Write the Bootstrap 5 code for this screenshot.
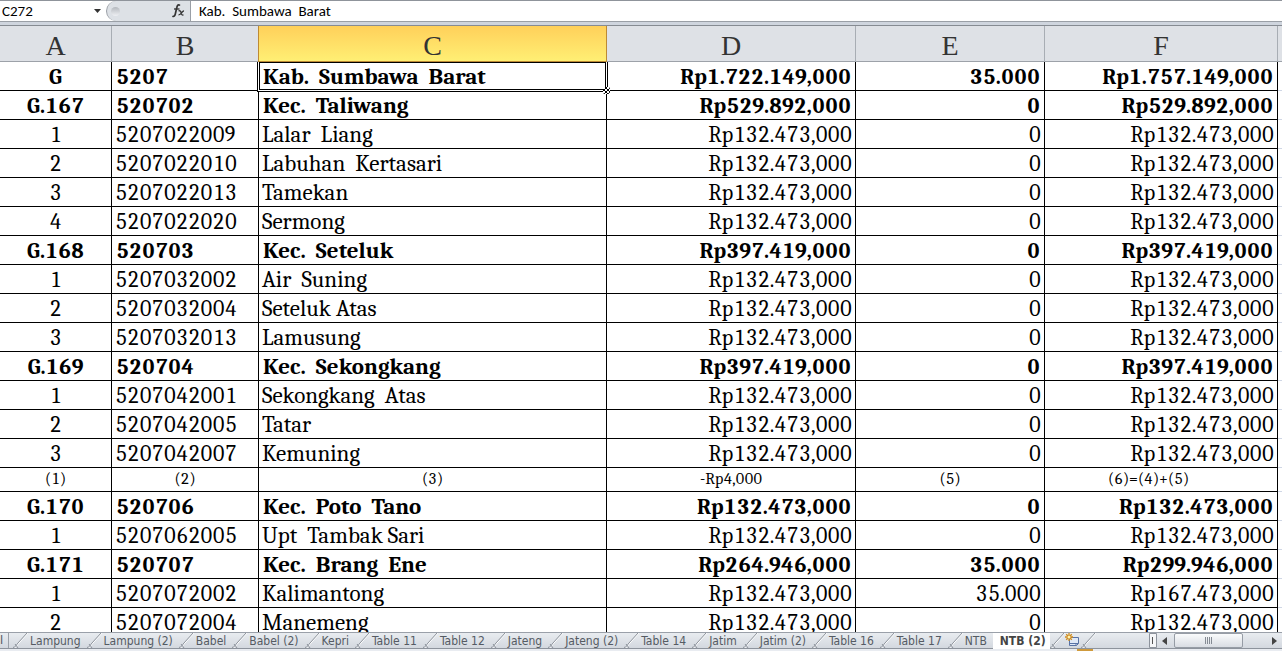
<!DOCTYPE html>
<html lang="id">
<head>
<meta charset="utf-8">
<meta name="viewport" content="width=device-width, initial-scale=1">
<title>NTB (2)</title>
<link href="https://cdn.jsdelivr.net/npm/bootstrap@5.3.0/dist/css/bootstrap.min.css" rel="stylesheet">
<style>
  body { font-family: "Noto Sans", "Open Sans", sans-serif; font-size: 12px; color: #000; background: #fff; }
  button, input { font: inherit; color: inherit; }

  /* formula bar */
  .formula-bar { height: 22px; border-top: 1px solid #8f949b; border-bottom: 1px solid #9a9fa6; font-family: Calibri, Carlito, "Noto Sans", sans-serif; font-size: 15px; }
  .formula-bar input { outline: 0; min-width: 0; }
  .name-box { width: 90px; padding: 0 2px; }
  .name-drop { width: 14px; }
  .fx-area { width: 85px; margin-left: 2px; background: #dde1e6; border: 1px solid #9a9fa6; border-width: 0 1px 0 1px; border-radius: 12px 0 0 12px; }
  .knob { width: 9px; height: 9px; border-radius: 50%; background: linear-gradient(#b4b8be, #eef0f3); }
  .formula-text { padding: 0 8px; white-space: pre; }
  .bar-gap { height: 4px; background: #cfd5de; border-bottom: 1px solid #868b92; }

  /* grid */
  .sheet { border-collapse: separate; border-spacing: 0; table-layout: fixed; font-family: Cambria, Caladea, "Liberation Serif", serif; font-size: 22px; font-variant-numeric: lining-nums tabular-nums; line-height: 26px; }
  .col-a { width: 112px; } .col-b { width: 147px; } .col-d { width: 249px; }
  .col-e { width: 189px; } .col-f { width: 233px; } .col-rest { width: 4px; }
  .sheet thead th { height: 36px; padding: 4px 0 0; font: 28px/30px "Liberation Serif", serif; text-align: center; color: #333; background: #dee1e6; border-right: 1px solid #a8adb4; border-bottom: 1px solid #9da2a9; }
  .sheet thead th.picked { background: linear-gradient(#ffd05a, #ffef74); border-color: #bd8a34; box-shadow: -1px 0 #bd8a34; }
  .sheet tbody td { height: 29px; padding: 2px 3px 0; border-right: 1px solid #000; border-bottom: 1px solid #000; white-space: pre; }
  .sheet tbody td:first-child { text-align: center; }
  .sheet tbody td:nth-child(3) { font-size: 23px; }
  .sheet tbody td:nth-child(n+4) { text-align: right; }
  .sheet tbody td:last-child, .sheet thead th:last-child { border-right: 0; padding: 0; }
  .sheet tbody td:last-child { border-bottom-color: #d0d7e5; }
  .sheet .group td { font-weight: 700; padding: 2px 4px 0; }
  .sheet .numbering td, .sheet .numbering td:nth-child(3) { height: 24px; padding-top: 0; font-size: 16px; line-height: 23px; text-align: center; }
  .sheet .numbering td:nth-child(n+4) { text-align: center; }
  .sheet .numbering td.label-d { text-align: left; padding-left: 93px; }
  .sheet .numbering td.label-f { text-align: left; padding-left: 63px; }
  .active-cell::before { content: ""; position: absolute; inset: 0; border: 1px solid #000; box-shadow: 0 0 0 1px #fff, 0 0 0 2px #000; clip-path: inset(0 -2px -2px -2px); }
  .active-cell::after { content: ""; position: absolute; right: -4px; bottom: -4px; width: 7px; height: 7px; background: conic-gradient(#000 25%, #fff 0 50%, #000 0 75%, #fff 0) 0 0 / 4px 4px; border-radius: 2px; }

  /* sheet tabs */
  .tab-strip { height: 17px; background: linear-gradient(#e9ecf0, #d3d8df); border-top: 1px solid #9aa0a9; border-bottom: 1px solid #8d939c; font-family: "DejaVu Sans Condensed", "DejaVu Sans", sans-serif; font-size: 12px; line-height: 14px; color: #555b63; }
  .tab-strip button { padding: 0; border: 0; background: none; white-space: nowrap; }
  .tab-edge { width: 9px; height: 15px; border-right: 1px solid #9aa0a9; }
  .slant { width: 15px; height: 15px; }
  .tab-name { padding: 0 6px 0 2px !important; }
  .tab-name.current { background: #fff; font-weight: 700; padding: 0 4px 0 7px !important; height: 16px; color: #444; }
  .scroll-area { width: 133px; height: 15px; }
  .thumb { width: 69px; height: 15px; border: 1px solid #969ca5 !important; border-radius: 2px; background: linear-gradient(#fafbfc, #d9dde3) !important; }
  .status-edge { height: 2px; background: #e9ecf1; }
  .status-mark { width: 16px; height: 2px; margin-left: 1077px; background: #cf9a3c; }
</style>
</head>
<body class="d-flex flex-column vh-100 overflow-hidden">

<div class="formula-bar d-flex align-items-stretch flex-shrink-0">
  <input class="name-box border-0" type="text" value="C272" aria-label="Name box">
  <button class="name-drop border-0 bg-transparent p-0 d-flex align-items-center justify-content-center" type="button" aria-label="Choose a name">
    <svg width="7" height="4" viewBox="0 0 7 4"><path d="M0 0h7L3.500 4z" fill="#333"/></svg>
  </button>
  <div class="fx-area d-flex align-items-center justify-content-between ps-1 pe-1 flex-shrink-0">
    <span class="knob"></span>
    <button class="border-0 bg-transparent p-0 d-flex" type="button" aria-label="Insert function">
      <svg width="15" height="16" viewBox="0 0 15 16" fill="none" stroke="#333"><path d="M9 2.500C7.500 1 6.300 2 5.800 4.500L4.300 11C3.900 13 2.800 14 1.500 13" stroke-width="1.700"/><path d="M3 6h5.500" stroke-width="1.300"/><path d="M7.500 8c1.600-.8 2.200.2 2.700 2s1 2.600 2.300 1.700M13 8c-2-.4-2.600 4-5.500 3.800" stroke-width="1.300"/></svg>
    </button>
  </div>
  <input class="formula-text border-0 flex-grow-1" type="text" value="Kab.  Sumbawa  Barat" aria-label="Formula">
</div>
<div class="bar-gap flex-shrink-0"></div>

<main class="flex-grow-1 overflow-hidden">
<table class="sheet w-100">
  <colgroup><col class="col-a"><col class="col-b"><col><col class="col-d"><col class="col-e"><col class="col-f"><col class="col-rest"></colgroup>
  <thead><tr><th>A</th><th>B</th><th class="picked">C</th><th>D</th><th>E</th><th>F</th><th></th></tr></thead>
  <tbody>
    <tr class="group"><td>G</td><td>5207</td><td class="active-cell position-relative">Kab.  Sumbawa  Barat</td><td>Rp1.722.149,000</td><td>35.000</td><td>Rp1.757.149,000</td><td></td></tr>
    <tr class="group"><td>G.167</td><td>520702</td><td>Kec.  Taliwang</td><td>Rp529.892,000</td><td>0</td><td>Rp529.892,000</td><td></td></tr>
    <tr><td>1</td><td>5207022009</td><td>Lalar  Liang</td><td>Rp132.473,000</td><td>0</td><td>Rp132.473,000</td><td></td></tr>
    <tr><td>2</td><td>5207022010</td><td>Labuhan  Kertasari</td><td>Rp132.473,000</td><td>0</td><td>Rp132.473,000</td><td></td></tr>
    <tr><td>3</td><td>5207022013</td><td>Tamekan</td><td>Rp132.473,000</td><td>0</td><td>Rp132.473,000</td><td></td></tr>
    <tr><td>4</td><td>5207022020</td><td>Sermong</td><td>Rp132.473,000</td><td>0</td><td>Rp132.473,000</td><td></td></tr>
    <tr class="group"><td>G.168</td><td>520703</td><td>Kec.  Seteluk</td><td>Rp397.419,000</td><td>0</td><td>Rp397.419,000</td><td></td></tr>
    <tr><td>1</td><td>5207032002</td><td>Air  Suning</td><td>Rp132.473,000</td><td>0</td><td>Rp132.473,000</td><td></td></tr>
    <tr><td>2</td><td>5207032004</td><td>Seteluk Atas</td><td>Rp132.473,000</td><td>0</td><td>Rp132.473,000</td><td></td></tr>
    <tr><td>3</td><td>5207032013</td><td>Lamusung</td><td>Rp132.473,000</td><td>0</td><td>Rp132.473,000</td><td></td></tr>
    <tr class="group"><td>G.169</td><td>520704</td><td>Kec.  Sekongkang</td><td>Rp397.419,000</td><td>0</td><td>Rp397.419,000</td><td></td></tr>
    <tr><td>1</td><td>5207042001</td><td>Sekongkang  Atas</td><td>Rp132.473,000</td><td>0</td><td>Rp132.473,000</td><td></td></tr>
    <tr><td>2</td><td>5207042005</td><td>Tatar</td><td>Rp132.473,000</td><td>0</td><td>Rp132.473,000</td><td></td></tr>
    <tr><td>3</td><td>5207042007</td><td>Kemuning</td><td>Rp132.473,000</td><td>0</td><td>Rp132.473,000</td><td></td></tr>
    <tr class="numbering"><td>(1)</td><td>(2)</td><td>(3)</td><td class="label-d">-Rp4,000</td><td>(5)</td><td class="label-f">(6)=(4)+(5)</td><td></td></tr>
    <tr class="group"><td>G.170</td><td>520706</td><td>Kec.  Poto  Tano</td><td>Rp132.473,000</td><td>0</td><td>Rp132.473,000</td><td></td></tr>
    <tr><td>1</td><td>5207062005</td><td>Upt  Tambak Sari</td><td>Rp132.473,000</td><td>0</td><td>Rp132.473,000</td><td></td></tr>
    <tr class="group"><td>G.171</td><td>520707</td><td>Kec.  Brang  Ene</td><td>Rp264.946,000</td><td>35.000</td><td>Rp299.946,000</td><td></td></tr>
    <tr><td>1</td><td>5207072002</td><td>Kalimantong</td><td>Rp132.473,000</td><td>35.000</td><td>Rp167.473,000</td><td></td></tr>
    <tr><td>2</td><td>5207072004</td><td>Manemeng</td><td>Rp132.473,000</td><td>0</td><td>Rp132.473,000</td><td></td></tr>
  </tbody>
</table>
</main>

<svg class="d-none">
  <symbol id="slant" viewBox="0 0 15 15"><path d="M0 15C3 14 3 12 5 10L14 0" fill="none" stroke="#fff" transform="translate(1 0)"/><path d="M0 14.500C3 14 3 12 5 10L14 0M2 11l3 4" fill="none" stroke="#8d939c"/></symbol>
</svg>
<nav class="tab-strip d-flex justify-content-between flex-shrink-0" aria-label="Sheets">
  <div class="d-flex">
    <span class="tab-edge me-1">I</span>
    <svg class="slant"><use href="#slant"/></svg><button class="tab-name" type="button">Lampung</button>
    <svg class="slant"><use href="#slant"/></svg><button class="tab-name" type="button">Lampung (2)</button>
    <svg class="slant"><use href="#slant"/></svg><button class="tab-name" type="button">Babel</button>
    <svg class="slant"><use href="#slant"/></svg><button class="tab-name" type="button">Babel (2)</button>
    <svg class="slant"><use href="#slant"/></svg><button class="tab-name" type="button">Kepri</button>
    <svg class="slant"><use href="#slant"/></svg><button class="tab-name" type="button">Table 11</button>
    <svg class="slant"><use href="#slant"/></svg><button class="tab-name" type="button">Table 12</button>
    <svg class="slant"><use href="#slant"/></svg><button class="tab-name" type="button">Jateng</button>
    <svg class="slant"><use href="#slant"/></svg><button class="tab-name" type="button">Jateng (2)</button>
    <svg class="slant"><use href="#slant"/></svg><button class="tab-name" type="button">Table 14</button>
    <svg class="slant"><use href="#slant"/></svg><button class="tab-name" type="button">Jatim</button>
    <svg class="slant"><use href="#slant"/></svg><button class="tab-name" type="button">Jatim (2)</button>
    <svg class="slant"><use href="#slant"/></svg><button class="tab-name" type="button">Table 16</button>
    <svg class="slant"><use href="#slant"/></svg><button class="tab-name" type="button">Table 17</button>
    <svg class="slant"><use href="#slant"/></svg><button class="tab-name" type="button">NTB</button>
    <button class="tab-name current" type="button">NTB (2)</button>
    <svg class="slant"><use href="#slant"/></svg>
    <button type="button" aria-label="Insert sheet" class="d-flex">
      <svg width="16" height="15" viewBox="0 0 16 15"><path d="M4.500 4.500h9v6l-2 2h-7z" fill="#dfe8f6" stroke="#5872a5"/><path d="M5 10.500h7.500M11 12.500v-2h2.500" fill="none" stroke="#5872a5"/><path d="M4 0v8M0 4h8M1.200 1.200l5.600 5.600M6.800 1.200L1.200 6.800" stroke="#d08a1c" stroke-width="1.300"/><circle cx="4" cy="4" r="1.500" fill="#fff3b0"/></svg>
    </button>
    <svg class="slant"><use href="#slant"/></svg>
  </div>
  <div class="scroll-area d-flex align-items-center">
    <svg width="8" height="15" viewBox="0 0 8 15"><path d="M.5.500h7v14h-7z" fill="#f5f6f8" stroke="#8d939c"/><path d="M3.500 4v7" stroke="#555"/></svg>
    <button type="button" class="d-flex px-1" aria-label="Scroll left"><svg width="9" height="8" viewBox="0 0 9 8"><path d="M6 0v8L1 4z" fill="#444"/></svg></button>
    <button type="button" class="thumb d-flex align-items-center justify-content-center" aria-label="Scroll bar"><svg width="8" height="7" viewBox="0 0 8 7"><path d="M.5 0v7M2.500 0v7M4.500 0v7M6.500 0v7" stroke="#858b94"/></svg></button>
    <button type="button" class="d-flex ms-auto pe-1" aria-label="Scroll right"><svg width="6" height="8" viewBox="0 0 6 8"><path d="M0 0v8l5-4z" fill="#444"/></svg></button>
  </div>
</nav>
<div class="status-edge flex-shrink-0"><div class="status-mark"></div></div>

<script src="https://cdn.jsdelivr.net/npm/bootstrap@5.3.0/dist/js/bootstrap.bundle.min.js"></script>
</body>
</html>
